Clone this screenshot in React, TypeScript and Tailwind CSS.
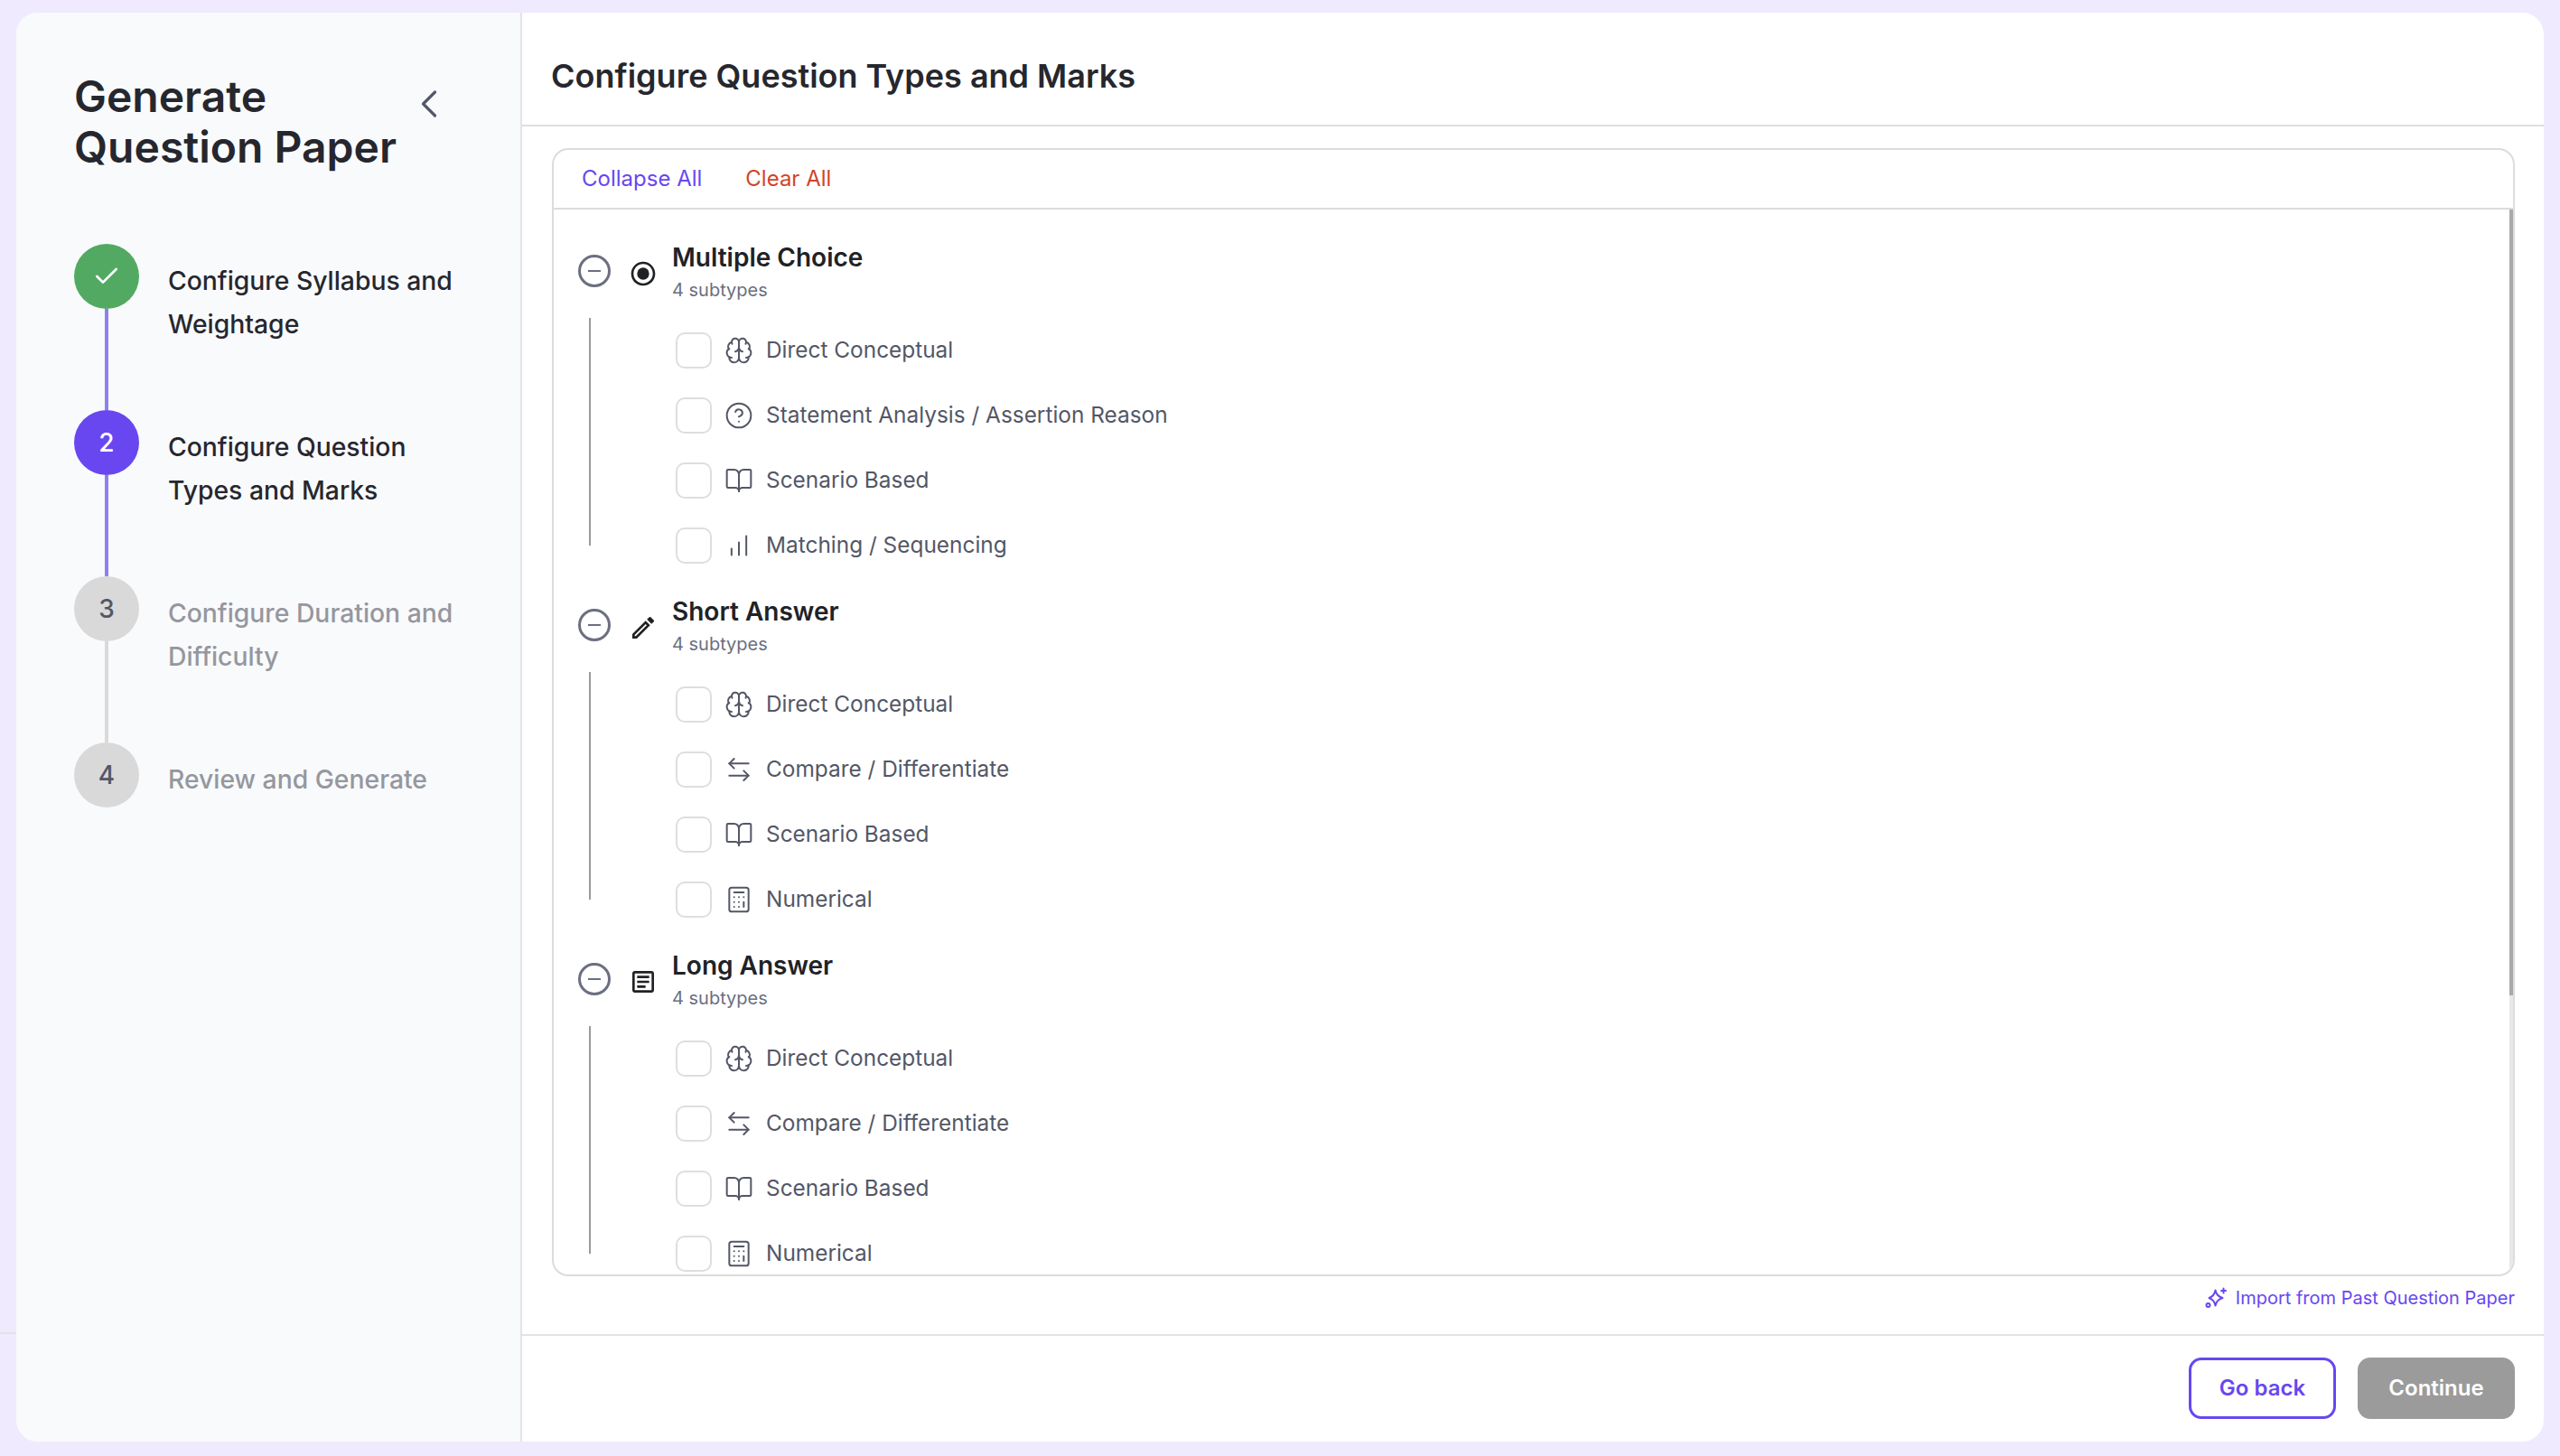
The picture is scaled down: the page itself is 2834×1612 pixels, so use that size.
import {
  ArrowLeftRight,
  BookOpen,
  Brain,
  Calculator,
  ChartNoAxesColumnIncreasing,
  Check,
  ChevronLeft,
  CircleHelp,
} from "lucide-react";
import { MdOutlineArticle, MdOutlineEdit, MdOutlineRadioButtonChecked } from "react-icons/md";

const ICONS = {
  brain: Brain,
  help: CircleHelp,
  book: BookOpen,
  bars: ChartNoAxesColumnIncreasing,
  swap: ArrowLeftRight,
  calc: Calculator,
};

type IconName = keyof typeof ICONS;

const SECTIONS: { title: string; icon: React.ReactNode; rows: [IconName, string][] }[] = [
  {
    title: "Multiple Choice",
    icon: <MdOutlineRadioButtonChecked size={32} />,
    rows: [
      ["brain", "Direct Conceptual"],
      ["help", "Statement Analysis / Assertion Reason"],
      ["book", "Scenario Based"],
      ["bars", "Matching / Sequencing"],
    ],
  },
  {
    title: "Short Answer",
    icon: <MdOutlineEdit size={32} />,
    rows: [
      ["brain", "Direct Conceptual"],
      ["swap", "Compare / Differentiate"],
      ["book", "Scenario Based"],
      ["calc", "Numerical"],
    ],
  },
  {
    title: "Long Answer",
    icon: <MdOutlineArticle size={32} />,
    rows: [
      ["brain", "Direct Conceptual"],
      ["swap", "Compare / Differentiate"],
      ["book", "Scenario Based"],
      ["calc", "Numerical"],
    ],
  },
];

function Step({
  state,
  number,
  lines,
  last,
  lineColor,
}: {
  state: "done" | "active" | "todo";
  number: number;
  lines: string[];
  last?: boolean;
  lineColor?: string;
}) {
  return (
    <div className="flex h-[184px] gap-[32px]">
      <div className="flex w-[72px] flex-col items-center">
        {state === "done" && (
          <div className="flex h-[72px] w-[72px] shrink-0 items-center justify-center rounded-full bg-[#52aa62] text-white">
            <Check size={32} strokeWidth={2} />
          </div>
        )}
        {state === "active" && (
          <div className="flex h-[72px] w-[72px] shrink-0 items-center justify-center rounded-full bg-[#6847f0] text-[28px] font-medium text-white">
            {number}
          </div>
        )}
        {state === "todo" && (
          <div className="flex h-[72px] w-[72px] shrink-0 items-center justify-center rounded-full bg-[#d9d9d9] text-[28px] font-medium text-[#535766]">
            {number}
          </div>
        )}
        {!last && <div className={`w-[4px] flex-1 ${lineColor}`} />}
      </div>
      <div
        className={`pt-[17px] text-[28.3px] leading-[48px] font-medium ${
          state === "todo" ? "text-[#95979e]" : "text-[#26272e]"
        }`}
      >
        {lines.map((l) => (
          <div key={l} className="whitespace-nowrap">
            {l}
          </div>
        ))}
      </div>
    </div>
  );
}

function Row({ icon, label }: { icon: IconName; label: string }) {
  const Icon = ICONS[icon];
  return (
    <div className="flex h-[72px] items-center">
      <div className="h-[40px] w-[40px] rounded-[10px] border-2 border-[#dedede] bg-white" />
      <div className="ml-[14px] flex w-[32px] items-center justify-center text-[#535766]">
        <Icon size={icon === "bars" ? 28 : 32} strokeWidth={icon === "bars" ? 1.7 : 1.5} />
      </div>
      <span className="ml-[14px] pb-[2px] text-[24.4px] text-[#535766]">{label}</span>
    </div>
  );
}

export default function App() {
  return (
    <div className="relative h-screen overflow-hidden bg-[#efeafd] px-[18px] pt-[14px] pb-[16px] font-['Inter',sans-serif]">
      {/* line of the page under the card */}
      <div className="absolute top-[1475px] left-0 h-[2px] w-[18px] bg-[#e3e3e8]" />

      <div className="relative flex h-full overflow-hidden rounded-[24px] bg-white">
        {/* Stepper */}
        <aside className="w-[560px] shrink-0 border-r-2 border-[#e3e3e8] bg-[#f9fafc] pt-[65px] pl-[64px]">
          <div className="flex items-center">
            <h1 className="w-[384px] text-[48px] leading-[56px] font-semibold text-[#26272e]">
              Generate
              <br />
              Question Paper
            </h1>
            <ChevronLeft size={52} strokeWidth={1.5} className="mb-[40px] -ml-[17px] text-[#535766]" />
          </div>

          <div className="mt-[79px]">
            <Step state="done" number={1} lines={["Configure Syllabus and", "Weightage"]} lineColor="bg-[#8f80ef]" />
            <Step state="active" number={2} lines={["Configure Question", "Types and Marks"]} lineColor="bg-[#8f80ef]" />
            <Step state="todo" number={3} lines={["Configure Duration and", "Difficulty"]} lineColor="bg-[#d9d9d9]" />
            <Step state="todo" number={4} lines={["Review and Generate"]} last />
          </div>
        </aside>

        {/* Main */}
        <main className="flex min-w-0 flex-1 flex-col">
          <header className="flex h-[126px] shrink-0 items-center border-b-2 border-[#dedede] pt-[16px] pl-[32px]">
            <h2 className="text-[36px] font-semibold text-[#26272e]">Configure Question Types and Marks</h2>
          </header>

          <div className="flex min-h-0 flex-1 flex-col px-[32px] pt-[24px] pl-[33px]">
            <div className="flex min-h-0 flex-1 flex-col overflow-hidden rounded-[18px] border-2 border-[#dcdcdc]">
              <div className="flex h-[66px] shrink-0 items-center gap-[48px] border-b-2 border-[#dcdcdc] pl-[31px] text-[24px]">
                <span className="text-[#6847f0]">Collapse All</span>
                <span className="text-[#d0452a]">Clear All</span>
              </div>

              <div className="relative min-h-0 flex-1 overflow-hidden pt-[35px] pl-[27px]">
                {SECTIONS.map((s) => (
                  <section key={s.title} className="mb-[19px]">
                    <div className="flex h-[72px] items-center">
                      <div className="mb-[6px] flex h-[36px] w-[36px] items-center justify-center rounded-full border-[3px] border-[#6b6f80]">
                        <div className="h-[2px] w-[14px] bg-[#6b6f80]" />
                      </div>
                      <div className="ml-[20px] w-[32px] text-[#202124]">{s.icon}</div>
                      <div className="ml-[16px]">
                        <div className="text-[28px] leading-[36px] font-semibold text-[#212226]">{s.title}</div>
                        <div className="text-[20px] leading-[36px] text-[#6b6f80]">4 subtypes</div>
                      </div>
                    </div>
                    <div className="mt-[13px] flex">
                      <div className="ml-[12px] h-[252px] w-[2px] bg-[#9a9a9a]" />
                      <div className="ml-[94px]">
                        {s.rows.map(([icon, label]) => (
                          <Row key={label} icon={icon} label={label} />
                        ))}
                      </div>
                    </div>
                  </section>
                ))}

                {/* scrollbar */}
                <div className="absolute top-0 right-0 bottom-0 w-[4px] bg-[#e8e8e8]">
                  <div className="h-[870px] bg-[#a9a9a9]" />
                </div>
              </div>
            </div>

            <div className="flex h-[64px] shrink-0 items-start justify-end gap-[10px] pt-[10px] text-[20px] leading-[28px] text-[#6847f0]">
              <svg width="24" height="24" viewBox="0 0 24 24" fill="none" stroke="currentColor" strokeWidth="2" strokeLinecap="round" strokeLinejoin="round" className="mt-[2px]">
                <path d="M11.500 3.500c.9 4.800 2.800 7 8 8.500-5.200 1.500-7.100 3.700-8 8.500-.9-4.800-2.600-7-7-8.500 4.400-1.500 6.100-3.700 7-8.500z" />
                <path d="M20.500 1.500v5M18 4h5" />
                <circle cx="3.500" cy="20" r="2" />
              </svg>
              <span>Import from Past Question Paper</span>
            </div>
          </div>

          <footer className="flex h-[119px] shrink-0 justify-end gap-[24px] border-t-2 border-[#e3e3e8] pt-[24px] pr-[32px]">
            <button className="h-[68px] w-[163px] rounded-[14px] border-[3px] border-[#6847f0] text-[24px] font-semibold text-[#6847f0]">
              Go back
            </button>
            <button className="h-[68px] w-[174px] rounded-[14px] bg-[#9b9b9b] text-[24px] font-semibold text-white">
              Continue
            </button>
          </footer>
        </main>
      </div>
    </div>
  );
}
